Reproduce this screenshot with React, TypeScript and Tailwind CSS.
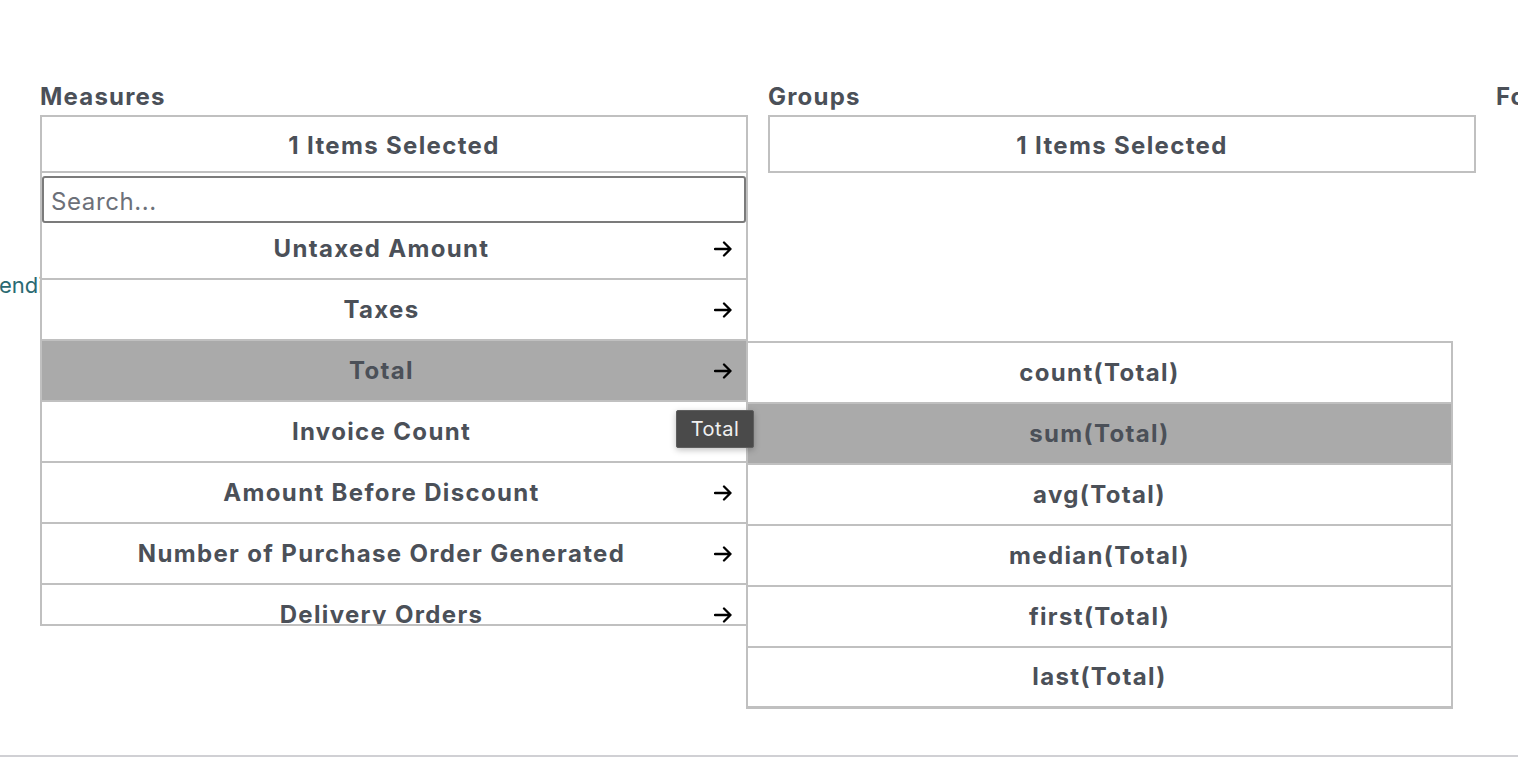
import React from 'react'

const measureRows = [
  { label: 'Untaxed Amount', arrow: true },
  { label: 'Taxes', arrow: true },
  { label: 'Total', arrow: true, active: true },
  { label: 'Invoice Count', arrow: false },
  { label: 'Amount Before Discount', arrow: true },
  { label: 'Number of Purchase Order Generated', arrow: true },
  { label: 'Delivery Orders', arrow: true },
]

const aggregates = ['count(Total)', 'sum(Total)', 'avg(Total)', 'median(Total)', 'first(Total)', 'last(Total)']

function Arrow() {
  return (
    <svg width="18" height="16" viewBox="0 0 18 16" fill="none" className="shrink-0">
      <path d="M1 8H16.5M10 1.5L16.5 8L10 14.5" stroke="#000" strokeWidth="2.3" strokeLinecap="round" strokeLinejoin="round" />
    </svg>
  )
}

function HeaderBox() {
  return (
    <div className="flex h-[58px] items-center justify-center border-2 border-[#c0c0c0] bg-white pt-[3px] text-[24px] font-bold tracking-[1.35px] text-[#4b5058]">
      1 Items Selected
    </div>
  )
}

export default function App() {
  return (
    <div className="relative h-[764px] w-full overflow-hidden bg-white font-['Inter',sans-serif] text-[#4b5058]">
      <div className="grid grid-cols-[708px_708px_708px] gap-x-[20px] pl-[40px] pt-[83px]">
        <div className="relative">
          <div className="mb-[4px] text-[24px] font-bold leading-[28px] tracking-[1.2px]">Measures</div>
          <HeaderBox />

          <div className="absolute left-0 top-full z-10 h-[453px] w-full overflow-hidden border-x-2 border-b-2 border-[#c0c0c0] bg-white pt-[3px]">
            <input
              placeholder="Search..."
              className="relative z-10 h-[47px] w-full rounded-[3px] border-2 border-[#7b7b7b] bg-white px-[7px] pt-[3px] text-[24px] tracking-[0.6px] text-[#4b5058] outline-none placeholder:text-[#6c7079]"
            />
            <div className="-mt-[4px]">
              {measureRows.map((row) => (
                <div
                  key={row.label}
                  className={`flex h-[61px] items-center border-b-2 border-[#c0c0c0] ${row.active ? 'bg-[#aaaaaa]' : 'bg-white'}`}
                >
                  <div className="flex-1 text-center text-[24px] font-bold tracking-[1.35px]">{row.label}</div>
                  <div className="-ml-[7px] mr-[14px] flex w-[18px] justify-center">{row.arrow && <Arrow />}</div>
                </div>
              ))}
            </div>
          </div>
        </div>

        <div>
          <div className="mb-[4px] text-[24px] font-bold leading-[28px] tracking-[1.2px]">Groups</div>
          <HeaderBox />
        </div>

        <div>
          <div className="mb-[4px] text-[24px] font-bold leading-[28px] tracking-[1.2px]">Format</div>
        </div>
      </div>

      <div className="-ml-[15px] mt-[98px] text-[22px] leading-[28px] text-[#2a6a72]">Pending</div>

      <div className="absolute bottom-[7px] left-0 w-full border-b-2 border-[#d0d0d4]" />

      <div className="absolute left-[746px] top-[341px] z-20 w-[707px] border-2 border-b-[3px] border-[#c0c0c0] bg-white">
        {aggregates.map((a, i) => (
          <div
            key={a}
            className={`flex items-center justify-center text-[24px] font-bold tracking-[1.35px] ${i < aggregates.length - 1 ? 'h-[61px] border-b-2 border-[#c0c0c0]' : 'h-[58px]'} ${a === 'sum(Total)' ? 'bg-[#aaaaaa]' : 'bg-white'}`}
          >
            {a}
          </div>
        ))}
      </div>

      <div className="absolute left-[676px] top-[410px] z-30 flex h-[38px] w-[78px] items-center justify-center rounded-[2px] border border-[#5e5e5e] bg-[#4a4a4a] text-[20px] tracking-[0.5px] text-[#f0f0f0] shadow-[0_2px_6px_rgba(0,0,0,0.25)]">
        Total
      </div>
    </div>
  )
}
